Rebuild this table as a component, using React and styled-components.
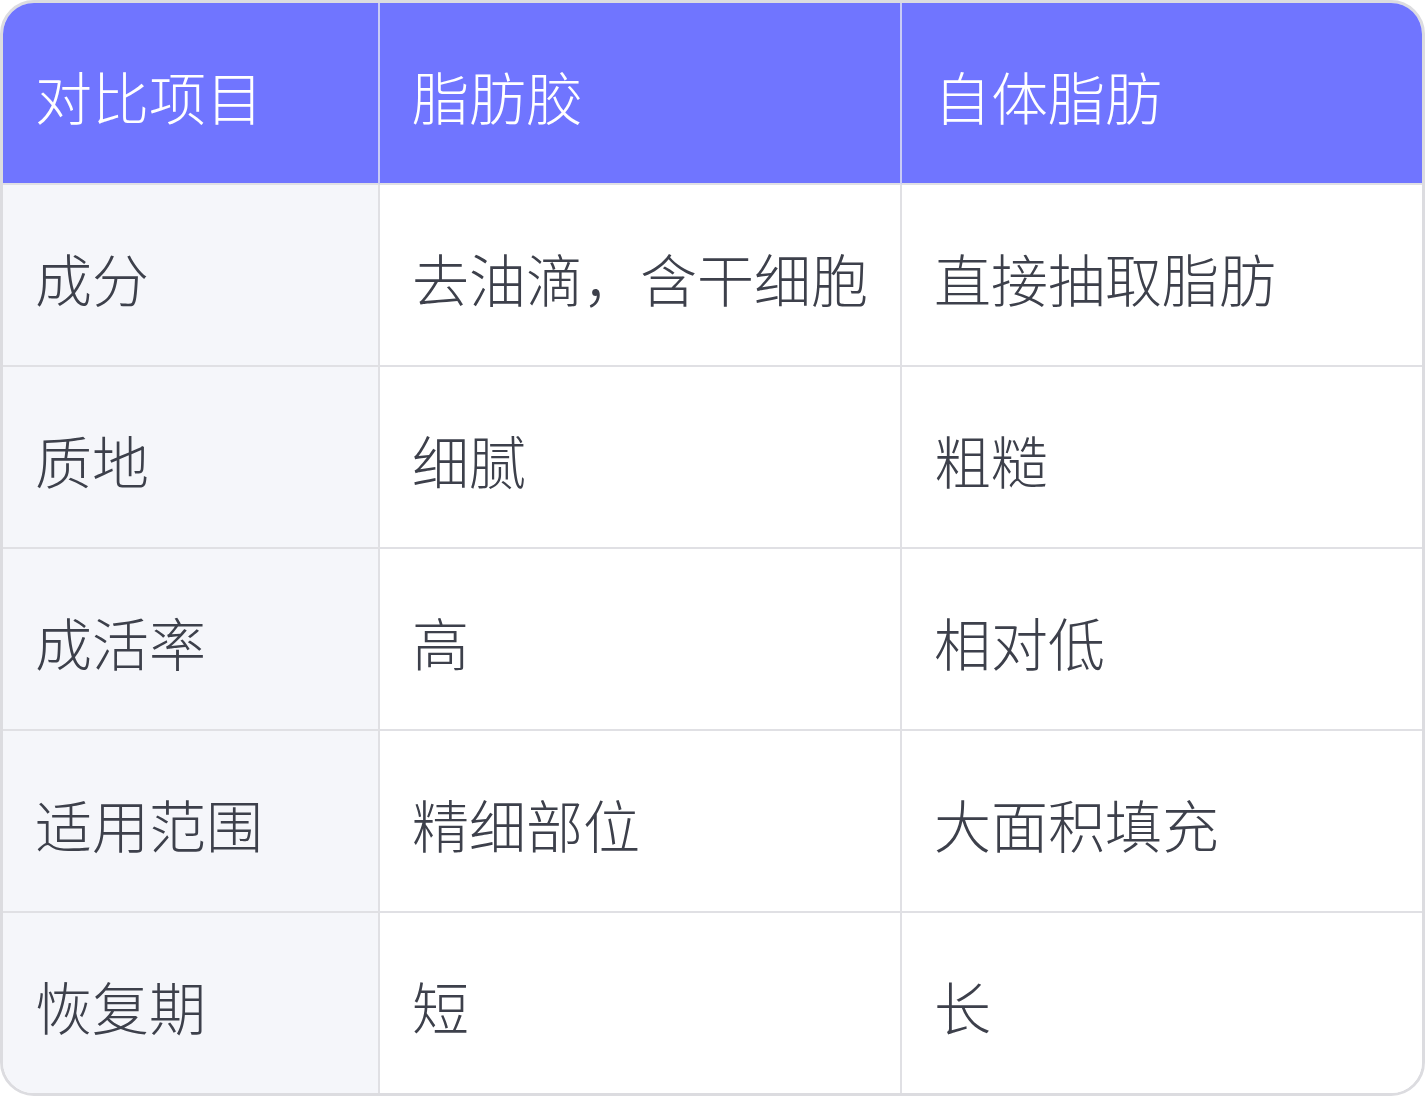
import React from "react";
import styled, { createGlobalStyle } from "styled-components";

const Global = createGlobalStyle`
  html, body { margin: 0; padding: 0; background: #ffffff; }
  body { font-family: "Noto Sans CJK SC", "Noto Sans", sans-serif; }
`;

const Frame = styled.div`
  box-sizing: border-box;
  width: 1425px;
  height: 1096px;
  border: 3px solid #dcdce0;
  border-radius: 34px;
  overflow: hidden;
  display: grid;
  grid-template-columns: 377px 522px 1fr;
  grid-template-rows: repeat(5, 182px) 1fr;
  background: #ffffff;
`;

const Cell = styled.div`
  box-sizing: border-box;
  display: flex;
  align-items: center;
  padding: 4px 0 0 32px;
  font-size: 57px;
  font-weight: 300;
  color: ${(p) => (p.$head ? "#ffffff" : "#3d404b")};
  background: ${(p) => (p.$head ? "#7075ff" : p.$first ? "#f5f6fa" : "#ffffff")};
  border-right: ${(p) =>
    p.$last ? "none" : `2px solid ${p.$head ? "#c9cbf6" : "#e0e0e4"}`};
  border-bottom: ${(p) => (p.$bottom ? "none" : "2px solid #e0e0e4")};
  white-space: nowrap;
`;

const rows = [
  ["对比项目", "脂肪胶", "自体脂肪"],
  ["成分", "去油滴，含干细胞", "直接抽取脂肪"],
  ["质地", "细腻", "粗糙"],
  ["成活率", "高", "相对低"],
  ["适用范围", "精细部位", "大面积填充"],
  ["恢复期", "短", "长"],
];

export default function App() {
  return (
    <>
      <Global />
      <Frame>
        {rows.map((r, ri) =>
          r.map((t, ci) => (
            <Cell
              key={`${ri}-${ci}`}
              $head={ri === 0}
              $first={ci === 0}
              $last={ci === 2}
              $bottom={ri === rows.length - 1}
            >
              {t}
            </Cell>
          ))
        )}
      </Frame>
    </>
  );
}
